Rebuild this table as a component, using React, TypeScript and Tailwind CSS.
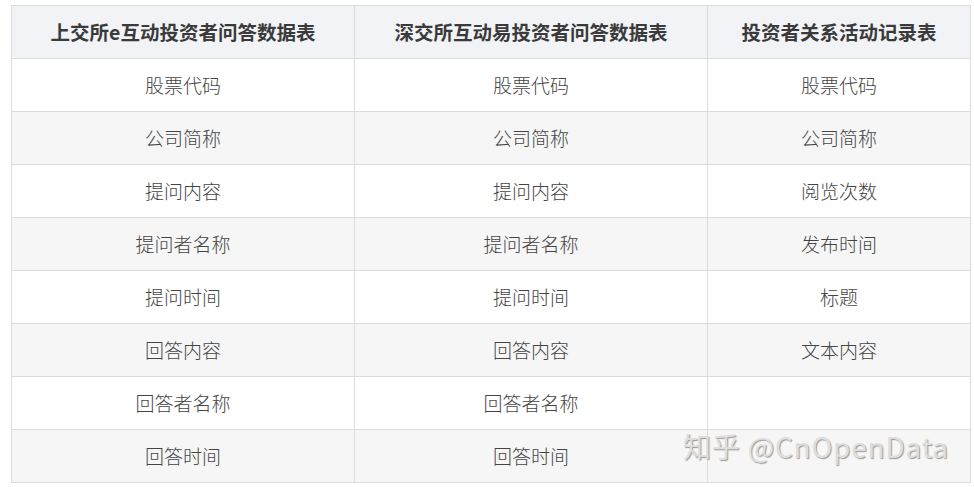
const headers = ['上交所e互动投资者问答数据表', '深交所互动易投资者问答数据表', '投资者关系活动记录表'];

const rows: string[][] = [
  ['股票代码', '股票代码', '股票代码'],
  ['公司简称', '公司简称', '公司简称'],
  ['提问内容', '提问内容', '阅览次数'],
  ['提问者名称', '提问者名称', '发布时间'],
  ['提问时间', '提问时间', '标题'],
  ['回答内容', '回答内容', '文本内容'],
  ['回答者名称', '回答者名称', ''],
  ['回答时间', '回答时间', ''],
];

const font = { fontFamily: '"Microsoft YaHei", "Noto Sans CJK SC", sans-serif' };

export default function App() {
  return (
    <div className="relative w-[974px] h-[487px] bg-white pl-[11px] pt-[5px]" style={font}>
      <table className="w-[959px] border-collapse table-fixed">
        <colgroup>
          <col className="w-[343px]" />
          <col className="w-[353px]" />
          <col className="w-[263px]" />
        </colgroup>
        <thead>
          <tr className="h-[53px] bg-[#f1f3f6]">
            {headers.map((h) => (
              <th key={h} className="border border-[#dcdcdc] text-center text-[19.5px] font-bold text-[#3a3a3a] p-0">
                {h}
              </th>
            ))}
          </tr>
        </thead>
        <tbody>
          {rows.map((r, i) => (
            <tr key={i} className={i % 2 === 0 ? 'h-[53px] bg-white' : 'h-[53px] bg-[#f6f6f6]'}>
              {r.map((c, j) => (
                <td key={j} className="border border-[#dcdcdc] text-center text-[19px] font-light text-[#444] p-0">
                  {c}
                </td>
              ))}
            </tr>
          ))}
        </tbody>
      </table>
      <div className="absolute left-[683px] top-[425px] text-[28px] text-[#dedede] [text-shadow:1px_1px_1px_#999] tracking-[0.8px] whitespace-nowrap">
        知乎 @CnOpenData
      </div>
    </div>
  );
}
